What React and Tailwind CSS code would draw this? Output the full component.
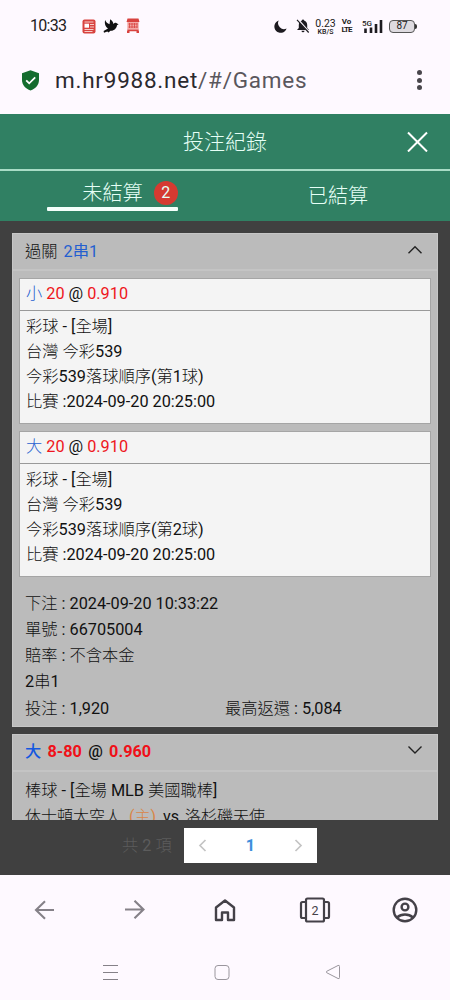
import React, { useState } from 'react';

const LEGS = [
  { id: 1, pick: '小', line: '20', odds: '0.910', rows: ['彩球 - [全場]', '台灣 今彩539', '今彩539落球順序(第1球)', '比賽 :2024-09-20 20:25:00'] },
  { id: 2, pick: '大', line: '20', odds: '0.910', rows: ['彩球 - [全場]', '台灣 今彩539', '今彩539落球順序(第2球)', '比賽 :2024-09-20 20:25:00'] },
];

const SUMMARY = ['下注 : 2024-09-20 10:33:22', '單號 : 66705004', '賠率 : 不含本金', '2串1'];

// Chinese runs are set lighter than the digits around them
const Mixed = ({ text }) =>
  text.split(/([\u4e00-\u9fff]+)/).map((part, i) =>
    /[\u4e00-\u9fff]/.test(part) ? (
      <span key={i} className="font-light">{part}</span>
    ) : (
      part
    )
  );

const StatusBar = () => (
  <div className="flex h-[52px] items-center pl-[30px] pr-[33px] text-[#1d1b20]">
    <span className="w-[52px] text-[16px] tracking-[-0.7px]">10:33</span>
    <svg width="14" height="15" viewBox="0 0 14 15" className="shrink-0">
      <rect x="0.5" y="0.5" width="13" height="14" rx="2" fill="#d8433f" />
      <path d="M2.5 3h9M8 5.5h4M8 8h4M2.5 10.5h9M2.5 12.5h8" stroke="#fbdcd9" strokeWidth="0.9" />
      <rect x="2.5" y="4.7" width="4.5" height="4" fill="#fff" />
    </svg>
    <svg width="16" height="15" viewBox="0 0 16 15" className="ml-[7px] shrink-0" fill="#111">
      <path d="M2.2 1C3 3.3 4.5 4.5 6.5 5.2L7.2 0.3C9 1.5 10 3 10.5 5C11.4 3.5 13.5 3.3 14 4.5L15.6 5.2L14 6.2C13.5 9.5 11 12 7.5 11.7L5.5 13.4L4.3 12.6L1 13.8L0.6 12L5 9.5C2.5 8 1.2 4.5 2.2 1Z" />
    </svg>
    <svg width="14" height="16" viewBox="0 0 14 16" className="ml-[7px] shrink-0">
      <path d="M1.5 0.5h11l1 3.5h-13z" fill="#d8433f" />
      <rect x="1.3" y="4" width="11.4" height="7.5" fill="#f3aaa7" />
      <path d="M2.5 6h9M3.5 5v5M6 5v5M8.500 5v5M11 5v5M2.500 9h9" stroke="#d8433f" strokeWidth="0.8" />
      <path d="M1.3 11.5h11.4v1.7H1.3zM1 13h2.5v2H1zM10.5 13H13v2h-2.5z" fill="#d8433f" />
    </svg>

    <div className="ml-auto flex items-center">
      <svg width="13" height="13" viewBox="0 0 13 13">
        <path d="M4.7 0.5A6.3 6.3 0 1 0 12.6 8.6A6 6 0 0 1 4.7 0.5Z" fill="#1d1b20" />
      </svg>
      <svg width="14" height="14" viewBox="0 0 14 14" className="ml-[9px]">
        <path d="M7 0.5a1.1 1.1 0 0 1 1.1 1.1C10.2 2.2 11.2 4 11.2 6v3l1.8 2H1l1.8-2V6c0-2 1-3.8 3.1-4.4A1.1 1.1 0 0 1 7 0.5ZM5.5 11.7h3a1.5 1.5 0 0 1-3 0Z" fill="#1d1b20" />
        <path d="M2 0.5L13 13" stroke="#fef9ff" strokeWidth="1.8" />
        <path d="M1 0.8L12.7 13.5" stroke="#1d1b20" strokeWidth="1.2" />
      </svg>
      <div className="ml-[5px] flex w-[21px] flex-col items-center">
        <span className="text-[10.5px] leading-[11px]">0.23</span>
        <span className="text-[7px] font-medium leading-[6px]">KB/S</span>
      </div>
      <div className="ml-[5px] flex w-[11px] flex-col items-center text-[8px] font-bold leading-[8px]">
        <span>Vo</span>
        <span className="tracking-[-0.9px]">LTE</span>
      </div>
      <svg width="21" height="15" viewBox="0 0 21 15" className="ml-[10px]">
        <text x="0" y="6.8" fontSize="8" fontWeight="500" fill="#1d1b20">5G</text>
        <path d="M3.5 9.5V14M9 8.5V14M14 5v9M19 1v13" stroke="#1d1b20" strokeWidth="2.6" />
      </svg>
      <div className="ml-[6px] flex items-center">
        <div className="flex h-[13px] w-[26px] items-center justify-center rounded-[4px] border border-[#555] bg-[#dedbe0] text-[10px] leading-none">87</div>
        <div className="h-[5px] w-[2px] rounded-r bg-[#333]" />
      </div>
    </div>
  </div>
);

const AddressBar = () => (
  <div className="flex h-[62px] items-center pb-[6px] pl-[21px] pr-[28px]">
    <svg width="19" height="21" viewBox="0 0 19 21">
      <path d="M9.5 0.3L18 3.3V10c0 5-3.5 8.8-8.5 10.5C4.5 18.8 1 15 1 10V3.3Z" fill="#146c2e" />
      <path d="M5.2 10.3l3 3 6-6" fill="none" stroke="#fff" strokeWidth="1.8" />
    </svg>
    <div className="ml-[15px] pt-px text-[22.5px] tracking-[0.76px] text-[#2b292e]">
      m.hr9988.net<span className="text-[#5a575d]">/#/Games</span>
    </div>
    <div className="ml-auto flex flex-col gap-[2.5px]">
      {[0, 1, 2].map((n) => (
        <span key={n} className="size-[5px] rounded-full bg-[#49464c]" />
      ))}
    </div>
  </div>
);

const Chevron = ({ up }) => (
  <svg width="16" height="10" viewBox="0 0 16 10" fill="none" stroke="#222" strokeWidth="1.4" className="mb-[4px]">
    <path d={up ? 'M1.5 8.3L8 1.8L14.5 8.3' : 'M1.5 1.5L8 8L14.5 1.5'} />
  </svg>
);

const Leg = ({ leg }) => (
  <div className="border border-[#a5a5a5] bg-[#f4f4f4]">
    <div className="h-[32px] border-b border-[#999] px-[6px] leading-[30px]">
      <span className="font-light text-[#1f5fd0]">{leg.pick}</span>{' '}
      <span className="text-[#ee1620]">{leg.line}</span> @ <span className="text-[#ee1620]">{leg.odds}</span>
    </div>
    <div className="h-[112px] px-[6px] pt-[3px] leading-[25px]">
      {leg.rows.map((row) => (
        <div key={row}><Mixed text={row} /></div>
      ))}
    </div>
  </div>
);

const BrowserNav = () => (
  <div className="grid h-[70px] grid-cols-5 items-center justify-items-center text-[#444148]">
    <svg width="22" height="20" viewBox="0 0 22 20" fill="none" stroke="#858188" strokeWidth="2.1">
      <path d="M20 10H2M11 1.2L2 10l9 8.8" />
    </svg>
    <svg width="22" height="20" viewBox="0 0 22 20" fill="none" stroke="#858188" strokeWidth="2.1">
      <path d="M1 9.5h18M10.5 0.7l9 8.8-9 8.8" />
    </svg>
    <svg width="22" height="24" viewBox="0 0 22 24" fill="none" stroke="currentColor" strokeWidth="2.4" strokeLinejoin="round">
      <path d="M2 9.5L11 2.5l9 7V22h-6v-7.500H8V22H2z" />
    </svg>
    <svg width="32" height="26" viewBox="0 0 32 26" fill="none" stroke="currentColor" strokeWidth="2.2" strokeLinejoin="round">
      <rect x="7" y="1.5" width="18" height="23" rx="1.5" />
      <path d="M7 5H3.5Q2 5 2 6.5v13Q2 21 3.5 21H7M25 5h3.5Q30 5 30 6.5v13q0 1.5-1.5 1.5H25" />
      <text x="16" y="17.5" textAnchor="middle" fontSize="12.5" fill="currentColor" stroke="none">2</text>
    </svg>
    <svg width="26" height="26" viewBox="0 0 26 26" fill="none" stroke="currentColor" strokeWidth="2.4">
      <circle cx="13" cy="13" r="11.3" />
      <circle cx="13" cy="10" r="3.4" />
      <path d="M5 20.5c4.5-4 11.500-4 16 0" />
    </svg>
  </div>
);

const SystemNav = () => (
  <div className="flex h-[55px] items-center justify-between pb-[2px] pl-[102px] pr-[109px]">
    <svg width="17" height="16" viewBox="0 0 17 16" stroke="#858188">
      <path d="M1 1.5h15M1 8.5h15M1 15.5h15" />
    </svg>
    <svg width="16" height="16" viewBox="0 0 16 16" fill="none" stroke="#9a969d">
      <rect x="1" y="1.5" width="14" height="14" rx="3" />
    </svg>
    <svg width="16" height="16" viewBox="0 0 16 16" fill="none" stroke="#9a969d" strokeLinejoin="round">
      <path d="M13 1.5Q14.5 0.8 14.5 2.5v11q0 1.7-1.5 1L1.7 8.7q-1-0.7 0-1.4z" />
    </svg>
  </div>
);

const App = () => {
  const [tab, setTab] = useState('open');

  return (
    <div className="flex h-[1000px] w-[450px] flex-col overflow-hidden bg-[#fef9ff] font-[Roboto,'Noto_Sans_CJK_TC',sans-serif] text-[16.25px] text-[#111]">
      <StatusBar />
      <AddressBar />

      <header className="grid h-[57px] grid-cols-[1fr_auto_1fr] items-center border-b-2 border-[#a8dcc6] bg-[#308063] text-[#e6fff6]">
        <span />
        <h1 className="pt-[2px] text-[21px] font-light leading-none">投注紀錄</h1>
        <button className="mr-[22px] justify-self-end" aria-label="關閉">
          <svg width="21" height="21" viewBox="0 0 21 21" stroke="#fff" strokeWidth="2">
            <path d="M1 1.5l19 19M20 1.5L1 20.5" />
          </svg>
        </button>
      </header>

      <nav className="grid h-[50px] grid-cols-2 bg-[#308063] text-[20.2px] font-light text-[#e6fff6]">
        <button onClick={() => setTab('open')} className="flex flex-col items-center pt-[9px]">
          <span className="ml-[35px] flex h-[26px] items-center gap-[11px]">
            未結算
            <span className="flex size-[24px] items-center justify-center rounded-full bg-[#d53a31] text-[16px] font-normal">2</span>
          </span>
          <span className={`mt-px h-[4px] w-[131px] rounded-[1px] ${tab === 'open' ? 'bg-[#f4fffb]' : ''}`} />
        </button>
        <button onClick={() => setTab('settled')} className="flex items-center justify-center pl-px pt-px">已結算</button>
      </nav>

      <main className="flex h-[654px] flex-col bg-[#404040]">
        <div className="flex h-[599px] flex-col gap-[7px] overflow-hidden px-[12px] pt-[12px]">
          <section className="h-[494px] shrink-0 border border-[#c6c6c6] bg-[#bbb]">
            <div className="flex h-[37px] items-center justify-between border-b-2 border-[#c4c4c4] pl-[12px] pr-[14px]">
              <span className="pt-px">
                <span className="font-light">過關</span>
                <span className="ml-[6px] text-[#245fd0]">2串1</span>
              </span>
              <Chevron up />
            </div>
            <div className="flex flex-col gap-[7px] px-[6px] pt-[6.5px]">
              {LEGS.map((leg) => <Leg key={leg.id} leg={leg} />)}
            </div>
            <div className="px-[12px] pt-[14px] leading-[26.3px]">
              {SUMMARY.map((row) => (
                <div key={row}><Mixed text={row} /></div>
              ))}
              <div className="grid grid-cols-2">
                <span><Mixed text="投注 : 1,920" /></span>
                <span><Mixed text="最高返還 : 5,084" /></span>
              </div>
            </div>
          </section>

          <section className="h-[160px] shrink-0 border border-[#c6c6c6] bg-[#bbb]">
            <div className="flex h-[37px] items-center justify-between border-b-2 border-[#c4c4c4] pb-px pl-[12px] pr-[14px]">
              <span className="flex gap-[6.3px] font-bold text-[#f01018]">
                <span className="font-medium text-[#1458e0]">大</span>
                <span>8-80</span>
                <span className="font-medium text-[#111]">@</span>
                <span>0.960</span>
              </span>
              <Chevron />
            </div>
            <div className="px-[12px] pt-[6px] leading-[26px]">
              <div><Mixed text="棒球 - [全場 MLB 美國職棒]" /></div>
              <div className="whitespace-pre text-[16px]">
                <Mixed text="休士頓太空人 " />
                <span className="text-[#d98648]"> <Mixed text="(主)" /></span>
                <span className="-ml-px"><Mixed text="  vs " /></span>
                <span className="-ml-[2px]"><Mixed text=" 洛杉磯天使" /></span>
              </div>
            </div>
          </section>
        </div>

        <footer className="flex h-[55px] items-start pl-[122px] pt-[8px]">
          <span className="w-[62px] leading-[35px] text-[#5c5c5c]"><Mixed text="共 2 項" /></span>
          <div className="flex h-[35px] w-[133px] items-center justify-between bg-white px-[14px]">
            <svg width="9" height="13" viewBox="0 0 9 13" fill="none" stroke="#c4c4c4" strokeWidth="1.7">
              <path d="M7.5 1L2 6.5L7.5 12" />
            </svg>
            <span className="pt-[2px] font-bold text-[#3d8fdc]">1</span>
            <svg width="9" height="13" viewBox="0 0 9 13" fill="none" stroke="#c4c4c4" strokeWidth="1.7">
              <path d="M1.5 1L7 6.5L1.5 12" />
            </svg>
          </div>
        </footer>
      </main>

      <BrowserNav />
      <SystemNav />
    </div>
  );
};

export default App;
